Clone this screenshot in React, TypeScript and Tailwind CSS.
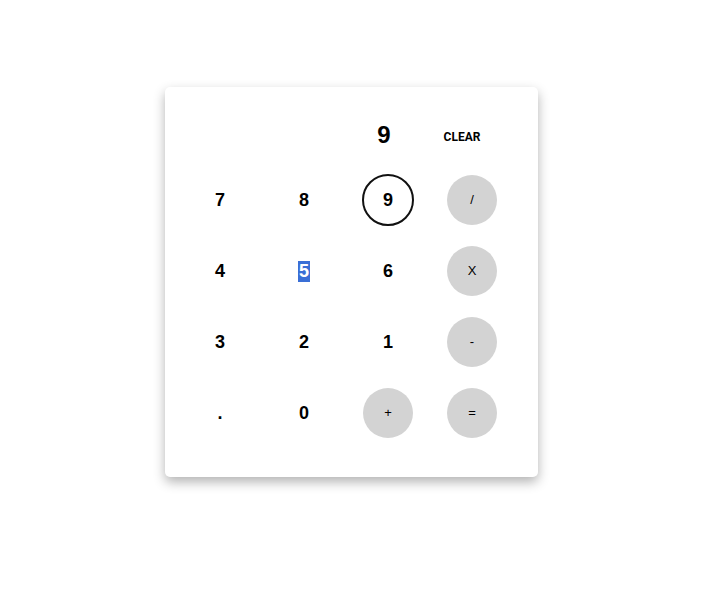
const keys: { label: string; kind: 'digit' | 'op' | 'active' | 'selected' }[] = [
  { label: '7', kind: 'digit' },
  { label: '8', kind: 'digit' },
  { label: '9', kind: 'active' },
  { label: '/', kind: 'op' },
  { label: '4', kind: 'digit' },
  { label: '5', kind: 'selected' },
  { label: '6', kind: 'digit' },
  { label: 'X', kind: 'op' },
  { label: '3', kind: 'digit' },
  { label: '2', kind: 'digit' },
  { label: '1', kind: 'digit' },
  { label: '-', kind: 'op' },
  { label: '.', kind: 'digit' },
  { label: '0', kind: 'digit' },
  { label: '+', kind: 'op' },
  { label: '=', kind: 'op' },
]

function Key({ label, kind }: { label: string; kind: string }) {
  if (kind === 'op') {
    return (
      <button className="w-[50px] h-[50px] rounded-full bg-[#d3d3d3] text-[13px] text-black flex items-center justify-center">
        {label}
      </button>
    )
  }
  if (kind === 'active') {
    return (
      <button className="w-[52px] h-[52px] rounded-full border-2 border-[#111] text-[18px] font-bold text-black flex items-center justify-center">
        {label}
      </button>
    )
  }
  return (
    <button className="w-[50px] h-[50px] rounded-full text-[18px] font-bold text-black flex items-center justify-center">
      {kind === 'selected' ? (
        <span className="bg-[#3a6fd6] text-white leading-[21px] px-px">{label}</span>
      ) : (
        label
      )}
    </button>
  )
}

export default function App() {
  return (
    <div className="w-[717px] h-[595px] bg-white font-['Liberation_Sans',Arial,sans-serif] pt-[87px] pl-[165px]">
      <div className="w-[373px] h-[390px] bg-white rounded-[5px] shadow-[0_5px_12px_rgba(0,0,0,0.3)] pl-[13px] pt-[30px]">
        <div className="grid grid-cols-[84px_84px_84px_84px] h-[37px] items-center">
          <div />
          <div />
          <div className="text-[24px] font-bold text-black text-center pr-[8px] -mt-[2px]">9</div>
          <div className="text-[12px] font-bold text-black text-center font-['Roboto',sans-serif] pr-[20px] mt-[3px]">CLEAR</div>
        </div>
        <div className="grid grid-cols-[84px_84px_84px_84px] auto-rows-[50px] gap-y-[21px] mt-[21px]">
          {keys.map((k, i) => (
            <div key={i} className="flex items-center justify-center">
              <Key label={k.label} kind={k.kind} />
            </div>
          ))}
        </div>
      </div>
    </div>
  )
}
